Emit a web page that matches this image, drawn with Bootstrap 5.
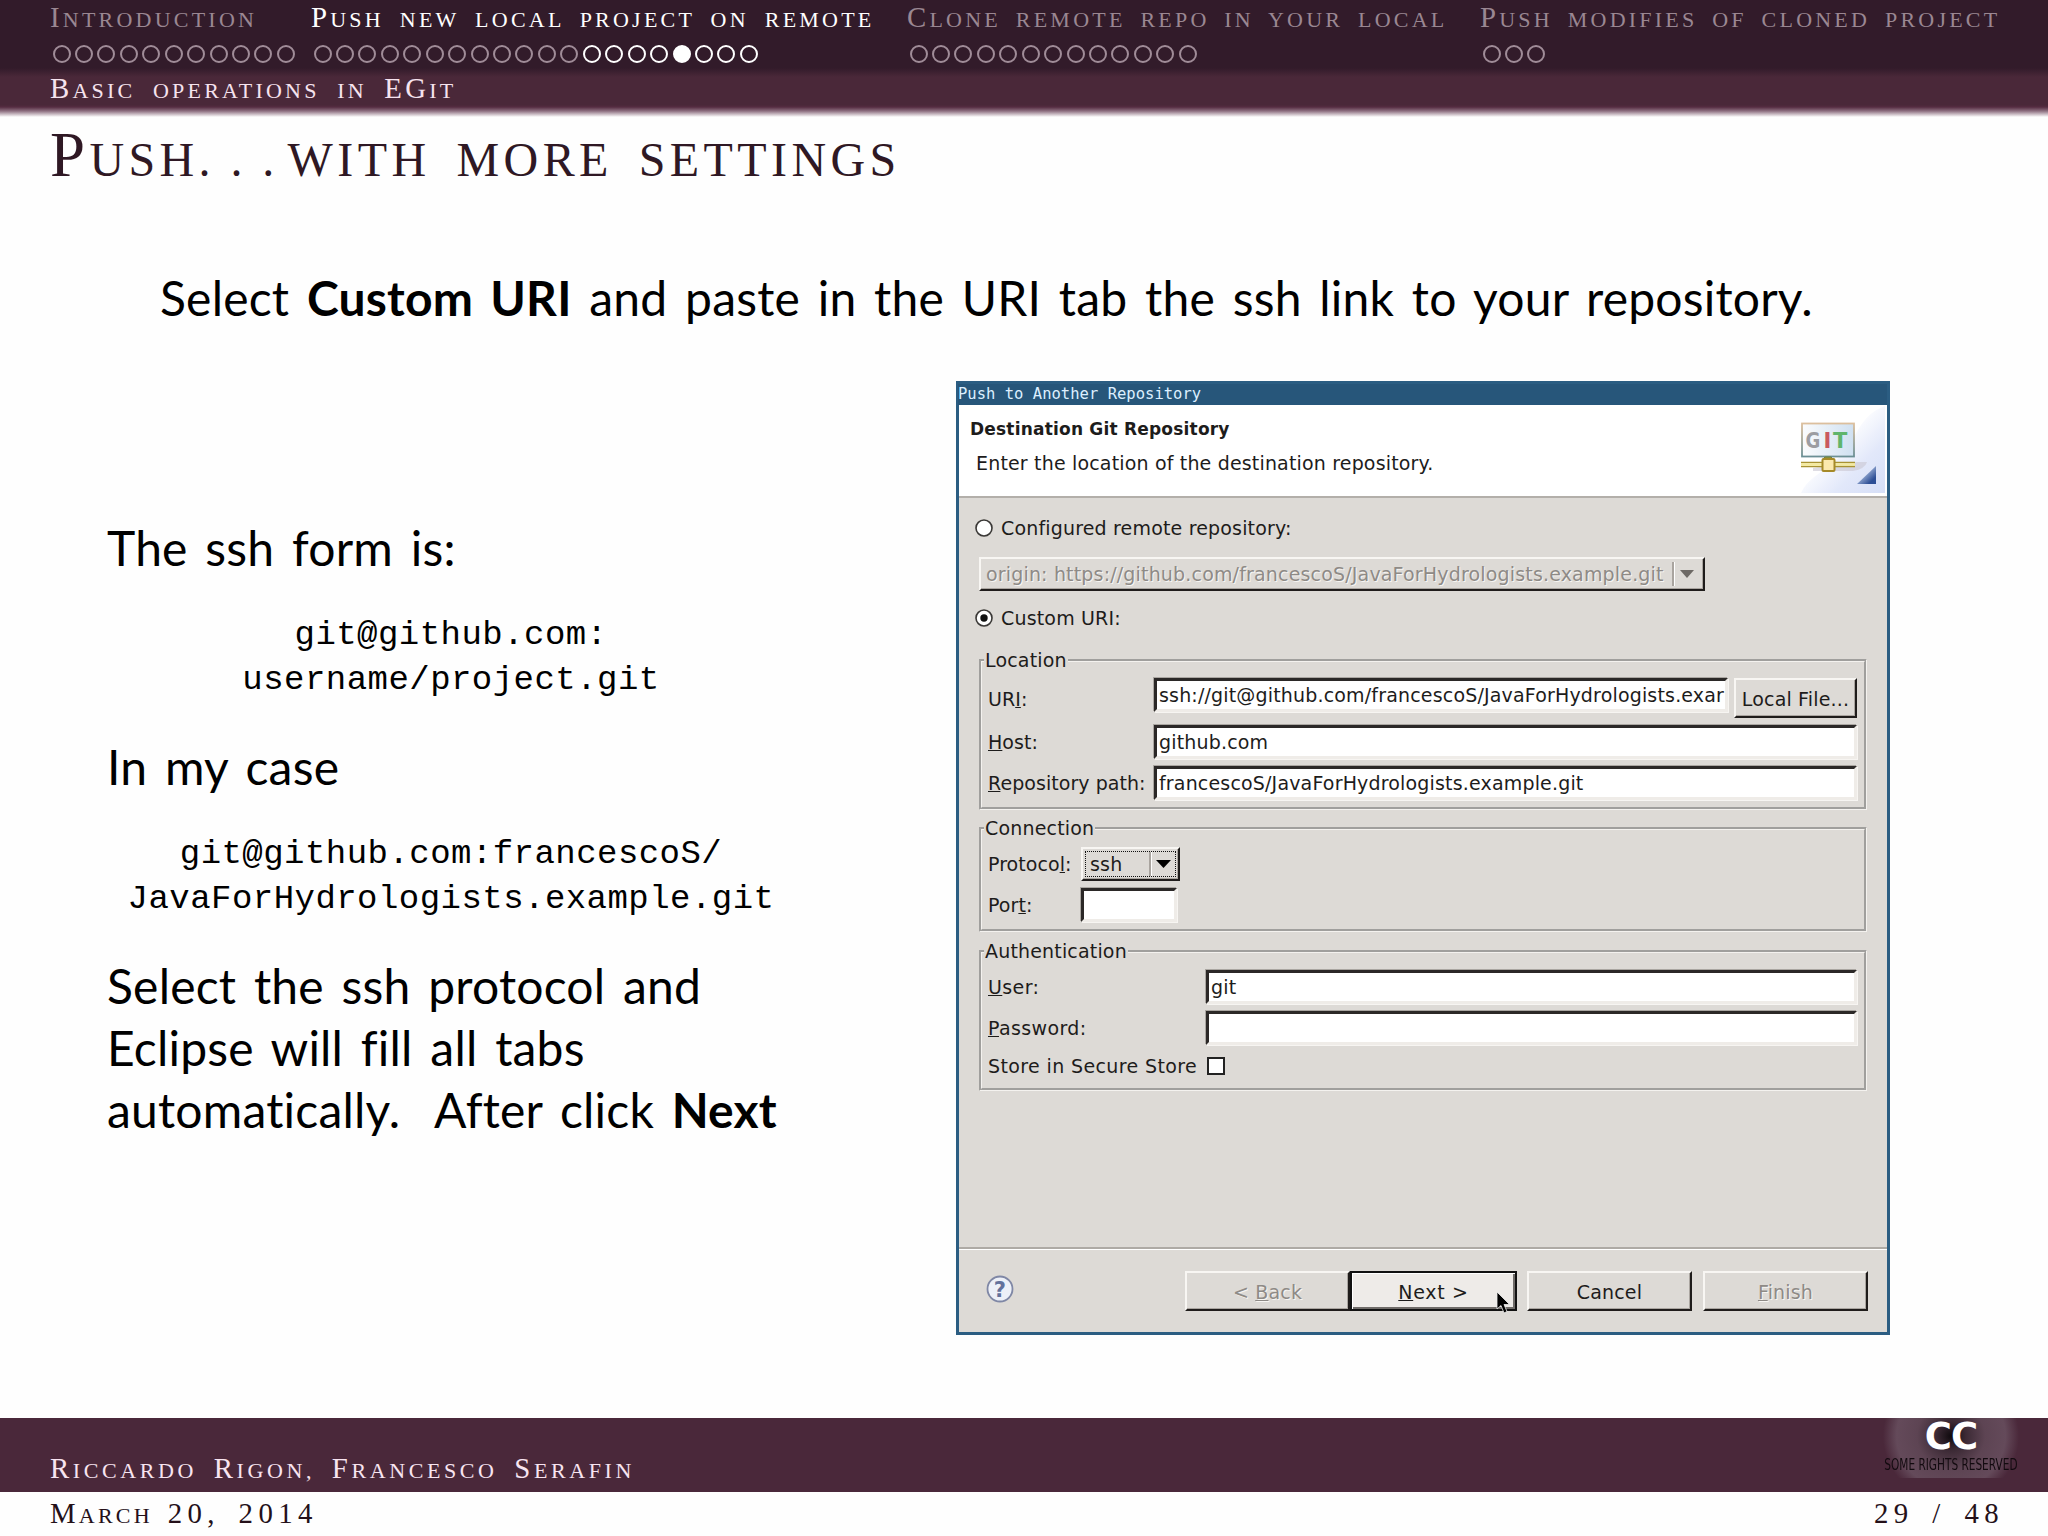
<!DOCTYPE html>
<html lang="en">
<head>
<meta charset="utf-8">
<title>Push with more settings</title>
<link href="https://cdn.jsdelivr.net/npm/bootstrap@5.3.0/dist/css/bootstrap.min.css" rel="stylesheet">
<style>
body{background:#fefefe;color:#000;overflow:hidden}
.slide{width:2048px;height:1536px}
/* small capitals: uppercase text with larger initials */
.sc{font-family:"Liberation Serif",serif;text-transform:uppercase;white-space:nowrap;word-spacing:6.1px;font-size:22px;line-height:30px;letter-spacing:3.22px}
.sc i{font-style:normal;font-size:1.31em;line-height:0}
.topbar{height:118px;padding:5px 0 0 50px;background:linear-gradient(#321b2a 0,#321b2a 68px,#4a2839 77px,#4a2839 105px,#552c41 107px,#8d6f80 111px,#fefefe 117px)}
.topbar .sc{color:#fff}
.topbar .off .sc{color:#9a8792}
.tab1{width:261px}.tab2{width:596px}.tab3{width:573px}
.topbar .tab2 .sc{word-spacing:7.2px}
.dots{height:20px;margin-top:10px;padding-left:2.5px;gap:4.45px}
.dots b{width:18px;height:18px;border:2px solid #fff;border-radius:50%}
.dots b.dim,.off .dots b{border-color:#a08c98}
.dots b.now{background:#fff}
.topbar .subline{margin-top:11px;color:#f6e3ee;word-spacing:8.8px}
.sc.headline{font-size:48px;line-height:80px;color:#2f1824;margin:2px 0 0 50px;letter-spacing:4.4px;word-spacing:9.6px}
.ell{word-spacing:-1px;margin-right:9px}
.prose{font-family:Lato,sans-serif;font-size:48px;line-height:62px;white-space:nowrap;word-spacing:5.2px;letter-spacing:.2px}
.lede{margin:67px 0 0 160px}
.cols{margin-top:52px}
.left{width:956px;padding:136px 0 0 107px}
.code-pair{margin:34px 0 33px;width:688px}
.tt{font-family:"Liberation Mono",monospace;font-size:34px;line-height:45px;letter-spacing:.46px;text-align:center;white-space:nowrap}
/* dialog */
.dlg{width:934px;height:954px;border:3px solid #2b5d82;background:#dddad6;font-family:"DejaVu Sans",sans-serif;font-size:19px;line-height:26px;letter-spacing:.17px;color:#1d1c1b;white-space:nowrap}
.dlg-title{height:21px;background:#27567a;color:#dcefff;font-family:"DejaVu Sans Mono",monospace;font-size:15.5px;letter-spacing:.02px;line-height:21px;margin-left:-1px}
.dlg-head{height:93px;background:#fff;border-bottom:2px solid #b3afaa}
.dlg-head h6{font-size:17px;line-height:26px;font-weight:700;margin:10.5px 0 0 11px;letter-spacing:.2px}
.dlg-head p{margin:8px 0 0 17px}
.dlg-body{padding:15px 0 0 20px}
.radio-row{height:30px;margin-left:-4px;gap:8px}
.bevel{border:2px solid;border-color:#f8f6f3 #1f1c1b #1f1c1b #f8f6f3;box-shadow:inset -1px -1px 0 #aaa5a0}
.ghost{color:#8e8a86;text-shadow:1px 1px 0 #f7f5f2}
.combo-off{width:726px;height:34px;margin:14px 0 12px;padding:0 8px 0 5px}
.sep{width:3px;height:24px;border-left:2px solid #a9a49f;border-right:1px solid #fff}
.grp{width:888px;border:3px groove #f4f2ef;padding:0 7px 0 6px}
.grp legend{float:none;width:auto;font-size:19px;line-height:26px;margin:0 0 0 -4px;padding:0 1px}
.grp1{height:163px;margin-top:14px;padding-top:1px}.grp2{height:117px;margin-top:5px;padding-top:2px}.grp3{height:153px;margin-top:6px;padding-top:2px}
.fld{height:34px;background:#fff;border:3px solid;border-color:#2b2827 #efece8 #efece8 #2b2827;box-shadow:-1px -1px 0 #aaa6a1,1px 1px 0 #f7f5f2;padding-left:2px;line-height:28px;overflow:hidden}
.lab1{width:166px}.lab2{width:93px}.lab3{width:218px}
.lab1,.lab2{letter-spacing:.05px}
.lab3,.wide{letter-spacing:.38px}
.next-row{margin-top:7px}
.w-uri{width:574px}.w-port{width:96px}
.combo{width:99px;height:34px;padding:2px}
.combo>div{border:1px dotted #111}
.chk{width:18px;height:18px;background:#fff;border:2px solid #222;margin-left:10px}
.dlg-foot{height:85px;border-top:2px solid #aeaaa5;box-shadow:inset 0 1px 0 #fff;padding:22px 19px 0 27px}
.pb{width:165px;height:40px;display:flex;align-items:center;justify-content:center;padding-top:1px}
.pb-file{width:123px}
.pb-cancel{margin:0 11px 0 10px}
.pb-next{background:#eeebe8;border:2px solid #111;box-shadow:inset 1px 1px 0 #fff,inset -2px -2px 0 #6f6b68;width:167px;letter-spacing:.7px}
.cursor{left:144px;top:18px}
/* footer */
.foot{height:74px;background:#4a283a}
.foot .sc{color:#f8e4f0;margin:38px 0 0 50px;letter-spacing:3.6px;word-spacing:7.6px}
.dateline{height:44px;padding:8.5px 44px 0 50px;color:#241019}
.dateline .num{letter-spacing:5.4px}
.cc{right:29px;top:0;width:136px;height:60px;text-align:center}
.cc-glow{position:absolute;inset:0;background:radial-gradient(ellipse 68px 66px at 50% 18px,#0f0a0d 0,#3c2a35 22%,#5d4453 50%,#644a5a 80%,rgba(100,74,90,0) 100%)}
.cc-big{font:700 37px/38px "DejaVu Sans",sans-serif;letter-spacing:-1px;color:#fff;position:relative}
.cc-line{font:15.5px/18px "DejaVu Sans",sans-serif;color:#120a0f;position:relative;white-space:nowrap;display:flex;justify-content:center}
.cc-line span{transform:scaleX(.68)}
</style>
</head>
<body>
<div class="slide d-flex flex-column position-relative">
  <header class="topbar flex-shrink-0">
    <div class="d-flex">
      <div class="tab1 off"><div class="sc"><i>I</i>ntroduction</div><div class="dots d-flex" data-n="11"></div></div>
      <div class="tab2"><div class="sc"><i>P</i>ush new local project on remote</div><div class="dots d-flex" data-n="20" data-dim="12" data-now="16"></div></div>
      <div class="tab3 off"><div class="sc"><i>C</i>lone remote repo in your local</div><div class="dots d-flex" data-n="13"></div></div>
      <div class="off"><div class="sc"><i>P</i>ush modifies of cloned project</div><div class="dots d-flex" data-n="3"></div></div>
    </div>
    <div class="sc subline"><i>B</i>asic operations in <i>EG</i>it</div>
  </header>
  <h1 class="sc headline"><i>P</i>ush<span class="ell">. . .</span>with more settings</h1>
  <div class="prose lede">Select <b>Custom URI</b> and paste in the URI tab the ssh link to your repository.</div>
  <div class="cols d-flex">
    <div class="left">
      <div class="prose">The ssh form is:</div>
      <div class="code-pair"><div class="tt">git@github.com:</div><div class="tt">username/project.git</div></div>
      <div class="prose">In my case</div>
      <div class="code-pair"><div class="tt">git@github.com:francescoS/</div><div class="tt">JavaForHydrologists.example.git</div></div>
      <div class="prose">Select the ssh protocol and</div>
      <div class="prose">Eclipse will fill all tabs</div>
      <div class="prose">automatically.&nbsp; After click <b>Next</b></div>
    </div>
    <section class="dlg d-flex flex-column">
      <div class="dlg-title">Push to Another Repository</div>
      <div class="dlg-head d-flex justify-content-between">
        <div><h6>Destination Git Repository</h6><p>Enter the location of the destination repository.</p></div>
        <svg width="90" height="90" viewBox="0 0 90 90">
          <defs>
            <linearGradient id="sky" x1="0" y1="0" x2="1" y2="1"><stop offset=".4" stop-color="#fff"/><stop offset=".7" stop-color="#e2e8fa"/><stop offset="1" stop-color="#d6dff7"/></linearGradient>
            <linearGradient id="scr" x1="0" y1="0" x2="1" y2="0"><stop offset="0" stop-color="#fbfcfd"/><stop offset="1" stop-color="#cfe0f1"/></linearGradient>
            <linearGradient id="frm" x1="0" y1="0" x2="0" y2="1"><stop offset="0" stop-color="#dcbf9d"/><stop offset="1" stop-color="#6b8f95"/></linearGradient>
            <linearGradient id="tri" x1="0" y1="0" x2="1" y2="1"><stop offset=".3" stop-color="#b5c6e4"/><stop offset=".8" stop-color="#2d4f96"/></linearGradient>
          </defs>
          <path d="M88 1C58 12 60 40 38 56 24 68 10 74 4 88H88Z" fill="url(#sky)"/>
          <path d="M60 57h10q-2 7-14 9h-40v-3z" fill="#c9c6d2" opacity=".6"/>
          <rect x="5" y="18.500" width="52" height="33" fill="url(#scr)" stroke="url(#frm)" stroke-width="1.800"/>
          <text x="8.500" y="43" font-family="DejaVu Sans" font-weight="bold" font-size="21" fill="#9c9da2" textLength="15" lengthAdjust="spacingAndGlyphs">G</text>
          <text x="26.500" y="43" font-family="DejaVu Sans" font-weight="bold" font-size="21" fill="#c9595f">I</text>
          <text x="36" y="43" font-family="DejaVu Sans" font-weight="bold" font-size="21" fill="#5fb56c">T</text>
          <path d="M4 57.500H58M4 61.500H58" stroke="#a99333" stroke-width="1.600"/><path d="M4 59.500H58" stroke="#f5eb9c" stroke-width="2.400"/>
          <path d="M26 54l2-2h6l2 2" fill="#8a9a45" stroke="#75803a"/>
          <rect x="25.500" y="54" width="12" height="12" rx="1" fill="#fbe9ae" stroke="#a68a28" stroke-width="2"/>
          <path d="M79 61V79H60Z" fill="url(#tri)"/>
        </svg>
      </div>
      <div class="dlg-body flex-grow-1">
        <div class="radio-row d-flex align-items-center">
          <svg width="18" height="18" viewBox="0 0 18 18"><circle cx="9" cy="9" r="8" fill="#fff" stroke="#3a3836" stroke-width="1.600"/></svg>
          <span>Configured remote repository:</span>
        </div>
        <div class="combo-off bevel ghost d-flex align-items-center">
          <span class="flex-grow-1">origin: https://github.com/francescoS/JavaForHydrologists.example.git</span>
          <span class="sep me-1"></span><svg width="16" height="9"><path d="M1 0H15L8 8Z" fill="#6d6965"/></svg>
        </div>
        <div class="radio-row d-flex align-items-center">
          <svg width="18" height="18" viewBox="0 0 18 18"><circle cx="9" cy="9" r="8" fill="#fff" stroke="#3a3836" stroke-width="1.600"/><circle cx="9" cy="9" r="3.700" fill="#111"/></svg>
          <span>Custom URI:</span>
        </div>
        <fieldset class="grp grp1"><legend>Location</legend>
          <div class="d-flex pt-1"><div class="lab1 pt-2">UR<u>I</u>:</div><div class="fld w-uri">ssh://git@github.com/francescoS/JavaForHydrologists.exar</div>
            <div class="pb pb-file bevel ms-auto">Local File...</div></div>
          <div class="d-flex next-row"><div class="lab1 pt-1"><u>H</u>ost:</div><div class="fld flex-grow-1">github.com</div></div>
          <div class="d-flex next-row"><div class="lab1 pt-1"><u>R</u>epository path:</div><div class="fld flex-grow-1">francescoS/JavaForHydrologists.example.git</div></div>
        </fieldset>
        <fieldset class="grp grp2"><legend>Connection</legend>
          <div class="d-flex pt-1"><div class="lab2 pt-1">Protoco<u>l</u>:</div>
            <div class="combo bevel"><div class="d-flex align-items-center h-100"><span class="flex-grow-1 ps-1">ssh</span><span class="sep me-1"></span><svg width="15" height="9" class="me-1"><path d="M0 0H15L7.500 8Z" fill="#000"/></svg></div></div></div>
          <div class="d-flex next-row"><div class="lab2 pt-1">Por<u>t</u>:</div><div class="fld w-port"></div></div>
        </fieldset>
        <fieldset class="grp grp3"><legend>Authentication</legend>
          <div class="d-flex pt-1"><div class="lab3 pt-1"><u>U</u>ser:</div><div class="fld flex-grow-1">git</div></div>
          <div class="d-flex next-row"><div class="lab3 pt-1"><u>P</u>assword:</div><div class="fld flex-grow-1"></div></div>
          <div class="d-flex align-items-center mt-2"><span class="wide">Store in Secure Store</span><span class="chk"></span></div>
        </fieldset>
      </div>
      <div class="dlg-foot d-flex">
        <svg width="28" height="28" viewBox="0 0 28 28" class="mt-1"><circle cx="14" cy="14" r="12.500" fill="#edf0f8" stroke="#7f87a5" stroke-width="1.800"/><text x="14" y="21.500" text-anchor="middle" font-family="DejaVu Sans" font-weight="bold" font-size="21" fill="#63719c">?</text></svg>
        <div class="d-flex ms-auto">
          <div class="pb bevel ghost"><span>&lt; <u>B</u>ack</span></div>
          <div class="pb pb-next position-relative"><span><u>N</u>ext &gt;</span>
            <svg class="cursor position-absolute" width="16" height="24" viewBox="0 0 16 24"><path d="M1 1V18L5 14.500L8 22L11 20.500L8 13.500H13.500Z" fill="#000" stroke="#eee" stroke-width=".8"/></svg></div>
          <div class="pb pb-cancel bevel">Cancel</div>
          <div class="pb bevel ghost"><span><u>F</u>inish</span></div>
        </div>
      </div>
    </section>
  </div>
  <footer class="mt-auto">
    <div class="foot position-relative d-flex">
      <div class="sc"><i>R</i>iccardo <i>R</i>igon, <i>F</i>rancesco <i>S</i>erafin</div>
      <div class="cc position-absolute"><div class="cc-glow"></div><div class="cc-big">CC</div><div class="cc-line"><span>SOME RIGHTS RESERVED</span></div></div>
    </div>
    <div class="dateline d-flex justify-content-between sc"><span><i>M</i>arch <i class="num">20, 2014</i></span><span><i class="num">29 / 48</i></span></div>
  </footer>
</div>
<script src="https://cdn.jsdelivr.net/npm/bootstrap@5.3.0/dist/js/bootstrap.bundle.min.js"></script>
<script>
// one circle per slide: data-n slides, the first data-dim dimmed, data-now filled
document.querySelectorAll('.dots').forEach(d => {
  for (let i = 0; i < +d.dataset.n; i++) {
    const b = document.createElement('b');
    if (i < +(d.dataset.dim || 0)) b.className = 'dim';
    if (d.dataset.now && i === +d.dataset.now) b.className = 'now';
    d.append(b);
  }
});
</script>
</body>
</html>
